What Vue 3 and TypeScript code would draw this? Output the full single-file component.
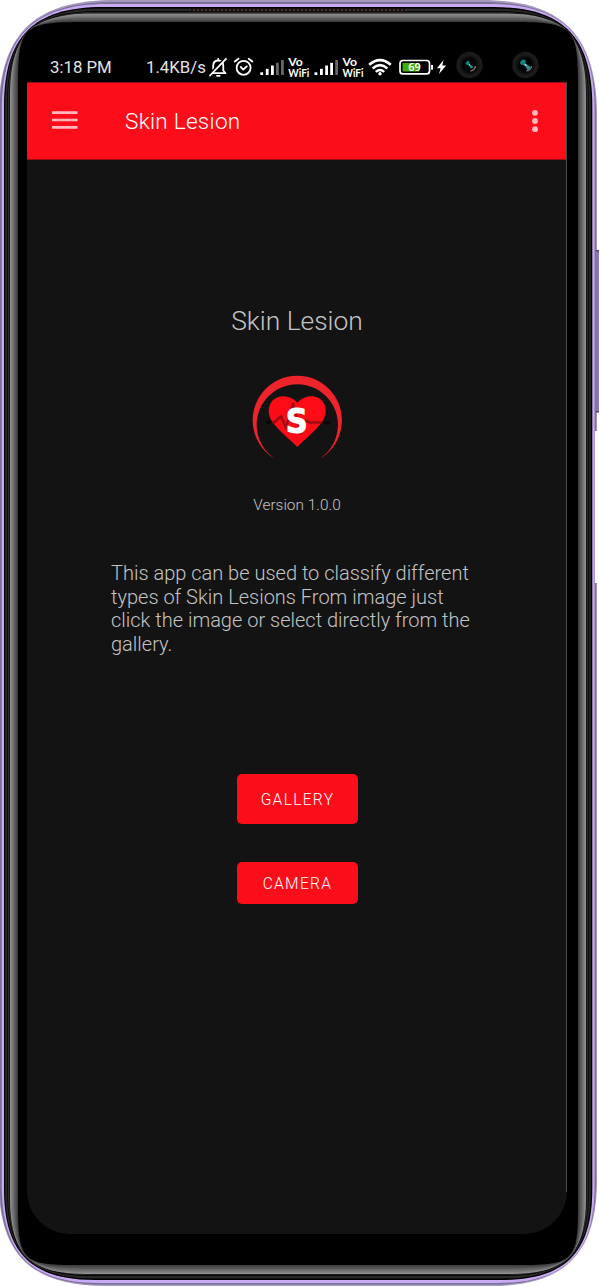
<script setup lang="ts">
interface Layer {
  l: number
  t: number
  r: number
  b: number
  e: number
  k: number
  fill: string
}

// Outline with soft, squircle-like corners: e = corner extent, k = curve tension
function outline(s: Layer): string {
  const { l, t, r, b, e, k } = s
  const h = e * (1 - k)
  const f = e * 0.92
  const g = f * (1 - k)
  return [
    `M${l} ${t + e}C${l} ${t + h} ${l + h} ${t} ${l + e} ${t}`,
    `H${r - e}C${r - h} ${t} ${r} ${t + h} ${r} ${t + e}`,
    `V${b - f}C${r} ${b - g} ${r - g} ${b} ${r - f} ${b}`,
    `H${l + f}C${l + g} ${b} ${l} ${b - g} ${l} ${b - f}Z`,
  ].join('')
}

const layers: Layer[] = [
  { l: -1.5, t: 0, r: 597, b: 1286, e: 116, k: 0.7, fill: '#a598bd' },
  { l: -0.5, t: 2, r: 596, b: 1284.6, e: 113, k: 0.7, fill: '#7d7098' },
  { l: 1.8, t: 4, r: 594.6, b: 1283, e: 106, k: 0.7, fill: '#c9abf5' },
  { l: 4, t: 7, r: 592.3, b: 1280, e: 99, k: 0.7, fill: '#000000' },
  { l: 5.2, t: 8.6, r: 590.8, b: 1278.5, e: 96, k: 0.7, fill: '#292728' },
  { l: 7.2, t: 11, r: 588.8, b: 1276, e: 90, k: 0.71, fill: '#050505' },
  { l: 8, t: 12, r: 588, b: 1275, e: 88, k: 0.71, fill: '#2e2e2e' },
  { l: 9.2, t: 12.8, r: 586.8, b: 1274.4, e: 85, k: 0.72, fill: '#0c0c0c' },
]
for (let i = 0; i < 8; i++) {
  const p = i / 8
  const c = Math.round(142 - 92 * p)
  layers.push({
    l: 10 + 8 * p,
    t: 13.5 + 8.5 * p,
    r: 586 - 8 * p,
    b: 1274 - 9 * p,
    e: 81 - 16 * p,
    k: 0.72 + 0.21 * p,
    fill: `rgb(${c},${c},${c})`,
  })
}
layers.push({ l: 18, t: 22, r: 578, b: 1265, e: 65, k: 0.93, fill: '#000000' })

const bars = [
  { x: 260.3, y: 72.3 },
  { x: 265.8, y: 68.8 },
  { x: 271, y: 65.5 },
  { x: 276, y: 62.8 },
  { x: 281, y: 60 },
]
const signals = [
  { dx: 0, strength: 3 },
  { dx: 54.2, strength: 4 },
]
const cameras = [
  { x: 469.5, s: 0.85 },
  { x: 525.5, s: 1.2 },
]
const actions = [
  { label: 'GALLERY', kind: 'tall' },
  { label: 'CAMERA', kind: 'short' },
]
</script>

<template>
  <div class="phone">
    <svg class="frame" viewBox="0 0 599 1286" width="599" height="1286" aria-hidden="true">
      <defs>
        <pattern id="mesh" x="192" y="8" width="4" height="4" patternUnits="userSpaceOnUse">
          <rect width="4" height="4" fill="#171011" />
          <rect x="1" y="1" width="2" height="2" fill="#41302f" />
        </pattern>
      </defs>
      <path v-for="(s, i) in layers" :key="i" :d="outline(s)" :fill="s.fill" />
      <rect x="595" y="431" width="4" height="152" fill="#fff" />
      <rect x="190" y="8" width="217" height="4" rx="2" fill="url(#mesh)" />
      <rect x="596" y="250" width="3" height="162" fill="#8a75b2" />
      <rect x="596" y="250" width="3" height="1.5" fill="#51446c" />
      <rect x="596" y="411" width="3" height="1.5" fill="#51446c" />
    </svg>

    <div class="status">
      <span class="clock">3:18 PM</span>
      <span class="speed">1.4KB/s</span>
      <svg class="tray" viewBox="206 50 340 32" width="340" height="32">
        <g fill="none" stroke="#fff" stroke-width="1.8" stroke-linecap="round" stroke-linejoin="round">
          <path d="M211.5 73.2H225.5L223.3 70.5V66Q223.3 60.5 218.3 60.5Q213.2 60.5 213.2 66V70.5L211.5 73.2M218.2 58.8V60M217 75.8H219.6" />
          <path d="M225 58L209 74.7" stroke="#000" stroke-width="2" />
          <path d="M226 58.8L210 75.5" />
          <circle cx="243.6" cy="67.8" r="7" />
          <path d="M240.7 67L243.3 69.5L246.8 66.4M234.8 61.5L238.5 58.8M252.4 61.5L248.7 58.8" />
        </g>
        <g v-for="s in signals" :key="s.dx" :transform="`translate(${s.dx} 0)`">
          <rect
            v-for="(b, i) in bars"
            :key="i"
            :x="b.x"
            :y="b.y"
            width="2.8"
            :height="75 - b.y"
            :fill="i < s.strength ? '#fff' : '#666'"
          />
          <text class="vo" x="288.3" y="66" textLength="14.5" lengthAdjust="spacingAndGlyphs">Vo</text>
          <text class="vo" x="288.3" y="76.8" textLength="21" lengthAdjust="spacingAndGlyphs">WiFi</text>
        </g>
        <g fill="none" stroke="#fff" stroke-width="2.6">
          <path d="M369.2 64.8Q380 55.5 390.8 64.8" />
          <path d="M372.6 68.4Q380 62 387.4 68.4" />
          <path d="M375.7 71.8Q380 68.2 384.3 71.8" stroke-width="2.2" />
        </g>
        <circle cx="380" cy="73.8" r="1.7" fill="#fff" />
        <rect x="400" y="60.5" width="29.5" height="13.4" rx="3" fill="none" stroke="#fff" stroke-width="1.7" />
        <rect x="402.5" y="63" width="17" height="8.4" rx="1" fill="#42ac0c" />
        <rect x="431" y="65" width="2" height="4.6" fill="#fff" />
        <text class="charge" x="408.2" y="71.4" textLength="12.4" lengthAdjust="spacingAndGlyphs">69</text>
        <path d="M443.5 60L437 68.2H440.6L439 74L446.2 65.6H442.3Z" fill="#fff" />
        <g v-for="c in cameras" :key="c.x" :transform="`translate(${c.x} 65)`">
          <circle r="13.2" fill="#1b1b1c" />
          <circle r="9.6" fill="#101011" />
          <circle r="7.4" fill="#020304" />
          <path d="M6 1A6 6 0 0 1 1 6" fill="none" stroke="#77706f" stroke-width="1.6" />
          <g :transform="`scale(${c.s})`">
            <path d="M-4.8 -2L-2.6 -4.6L-.2 -4.4L.4 -.4L-.4 .4L-3.6 -.2Z" fill="#12857f" />
            <path d="M-.4 .6L.8 -.4L3.8 1.2L3.6 3.4L1.6 4.2Z" fill="#1f958e" />
            <circle r=".9" fill="#9eeee4" />
          </g>
        </g>
      </svg>
    </div>

    <main class="screen">
      <header class="bar">
        <svg class="menu" viewBox="0 0 26 18" width="26" height="18">
          <path d="M0 1.6H25.5M0 9H25.5M0 16.4H25.5" stroke="#ffb9be" stroke-width="2.7" />
        </svg>
        <span class="title">Skin Lesion</span>
        <svg class="more" viewBox="0 0 6 24" width="6" height="24">
          <circle cx="3" cy="3.8" r="2.9" />
          <circle cx="3" cy="12" r="2.9" />
          <circle cx="3" cy="20.2" r="2.9" />
        </svg>
      </header>

      <h1 class="heading">Skin Lesion</h1>
      <svg class="logo" viewBox="250 373 95 92" width="95" height="92">
        <path d="M277 460A44.6 44.6 0 1 1 317.6 460A40.6 40.6 0 1 0 277 460Z" fill="#ed242c" />
        <path
          d="M297.3 447C292 441.5 281 432.5 274 424C268.5 417 267.3 410 270.3 404C275 394.5 289.5 393.5 297.3 403C305 393.5 319.5 394.5 324.2 404C327.2 410 326 417 320.5 424C313.5 432.5 302.5 441.5 297.3 447Z"
          fill="#fd0b16"
        />
        <path
          d="M268 422.5H274L281 416L286 428L293 404L301 434L306 420L309 422.5H326"
          fill="none"
          stroke="#710b12"
          stroke-opacity=".7"
          stroke-width="2.4"
          stroke-linejoin="round"
        />
        <path d="M268 422.5H270M324.5 422.5H328.5" stroke="#090607" stroke-width="3.4" stroke-linecap="round" />
        <text class="letter" x="285.8" y="433" textLength="22" lengthAdjust="spacingAndGlyphs">S</text>
      </svg>
      <p class="version">Version 1.0.0</p>
      <p class="about">
        This app can be used to classify different<br />types of Skin Lesions From image just<br />click the image or
        select directly from the<br />gallery.
      </p>
      <div class="actions">
        <button v-for="a in actions" :key="a.label" class="action" :class="a.kind" type="button">{{ a.label }}</button>
      </div>
    </main>
  </div>
</template>

<style>
body {
  margin: 0;
  background: #fff;
}
</style>

<style scoped>
.phone {
  position: relative;
  box-sizing: border-box;
  width: 599px;
  height: 1286px;
  padding: 50px 32px 0 27px;
  overflow: hidden;
  font-family: Roboto, "Liberation Sans", sans-serif;
  color: #fff;
}
.frame {
  position: absolute;
  inset: 0;
}
.status {
  position: relative;
  display: flex;
  height: 32px;
  padding-left: 23px;
  font-size: 16.8px;
  line-height: 35px;
  color: #e4e4e4;
  white-space: nowrap;
}
.clock {
  width: 96px;
}
.speed {
  width: 60px;
}
.tray {
  flex: none;
}
.vo {
  font: 700 11px Lato, "Liberation Sans", sans-serif;
  fill: #fff;
}
.charge {
  font: 600 11px "Open Sans", sans-serif;
  fill: #fff;
}
.screen {
  position: relative;
  display: flex;
  flex-direction: column;
  align-items: center;
  width: 540px;
  height: 1152px;
  background: #131313;
  border-radius: 0 0 43px 43px;
}
.screen::after {
  content: "";
  position: absolute;
  top: 0;
  right: 0;
  width: 1px;
  height: 1110px;
  background: #4c4c4c;
}
.bar {
  display: flex;
  align-items: center;
  align-self: stretch;
  box-sizing: border-box;
  height: 78px;
  padding: 0 29px 0 25px;
  background: #fb0e19;
  border-top: 1px solid #9b0d13;
  border-bottom: 1px solid #9b0d13;
}
.menu {
  margin: -2px 47px 0 0;
}
.title {
  flex: 1;
  font-size: 22.5px;
  line-height: 28px;
  font-weight: 300;
  letter-spacing: 0.3px;
  padding-bottom: 1px;
}
.more {
  fill: #ffb9be;
}
.heading {
  margin: 145px 0 0;
  height: 32px;
  font-size: 26.4px;
  line-height: 32px;
  font-weight: 300;
  color: #c4c4c4;
}
.logo {
  margin-top: 36px;
}
.letter {
  font: 700 34px "DejaVu Sans", sans-serif;
  fill: #fff;
  stroke: #fff;
  stroke-width: 1px;
}
.version {
  margin: 29px 0 0;
  font-size: 15.4px;
  line-height: 22px;
  font-weight: 300;
  color: #c4c4c4;
}
.about {
  align-self: flex-start;
  margin: 46px 0 0 84px;
  font-size: 20px;
  line-height: 23.6px;
  font-weight: 300;
  color: #c4c4c4;
  white-space: nowrap;
}
.actions {
  display: flex;
  flex-direction: column;
  gap: 38px;
  margin-top: 118px;
}
.action {
  width: 121px;
  padding: 1px 0 0 1px;
  border: 0;
  border-radius: 5px;
  background: #fb0e19;
  color: #fff;
  font: 300 15.6px Roboto, sans-serif;
  letter-spacing: 1.3px;
}
.tall {
  height: 50px;
}
.short {
  height: 41.5px;
}
</style>
